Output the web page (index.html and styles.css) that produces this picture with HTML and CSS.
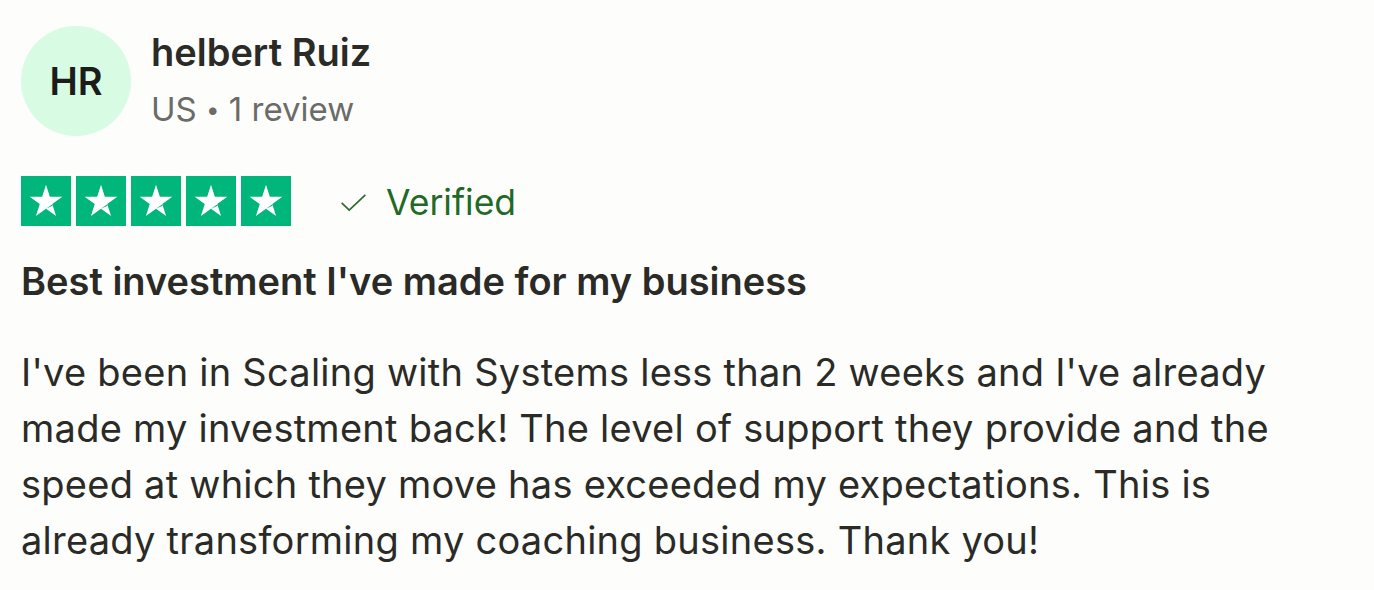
FILE: index.html
```html
<!DOCTYPE html>
<html lang="en">
<head>
<meta charset="utf-8">
<title>Review</title>
<link rel="stylesheet" href="styles.css">
</head>
<body>
<article class="review">
  <header class="consumer">
    <div class="avatar">HR</div>
    <div class="consumer-info">
      <div class="name">helbert Ruiz</div>
      <div class="meta">US <span class="dot">•</span> 1 review</div>
    </div>
  </header>
  <div class="rating-row">
    <div class="stars">
      <span class="star"><svg viewBox="0 0 24 24"><path d="M12 3.2l2.1 6.5h6.8l-5.5 4 2.1 6.5L12 16.2l-5.5 4 2.1-6.5-5.5-4h6.8z" fill="#fff"/><path d="M12 16.2l3.3-2.3 0.25 0.75z" fill="#00b67a"/></svg></span>
      <span class="star"><svg viewBox="0 0 24 24"><path d="M12 3.2l2.1 6.5h6.8l-5.5 4 2.1 6.5L12 16.2l-5.5 4 2.1-6.5-5.5-4h6.8z" fill="#fff"/><path d="M12 16.2l3.3-2.3 0.25 0.75z" fill="#00b67a"/></svg></span>
      <span class="star"><svg viewBox="0 0 24 24"><path d="M12 3.2l2.1 6.5h6.8l-5.5 4 2.1 6.5L12 16.2l-5.5 4 2.1-6.5-5.5-4h6.8z" fill="#fff"/><path d="M12 16.2l3.3-2.3 0.25 0.75z" fill="#00b67a"/></svg></span>
      <span class="star"><svg viewBox="0 0 24 24"><path d="M12 3.2l2.1 6.5h6.8l-5.5 4 2.1 6.5L12 16.2l-5.5 4 2.1-6.5-5.5-4h6.8z" fill="#fff"/><path d="M12 16.2l3.3-2.3 0.25 0.75z" fill="#00b67a"/></svg></span>
      <span class="star"><svg viewBox="0 0 24 24"><path d="M12 3.2l2.1 6.5h6.8l-5.5 4 2.1 6.5L12 16.2l-5.5 4 2.1-6.5-5.5-4h6.8z" fill="#fff"/><path d="M12 16.2l3.3-2.3 0.25 0.75z" fill="#00b67a"/></svg></span>
    </div>
    <div class="verified">
      <svg class="check" viewBox="0 0 28 20"><path d="M1.5 10.5l8 7.5L26.5 2" fill="none" stroke="#2a6b2f" stroke-width="1.8"/></svg>
      <span>Verified</span>
    </div>
  </div>
  <h2 class="title">Best investment I've made for my business</h2>
  <p class="body">I've been in Scaling with Systems less than 2 weeks and I've already made my investment back! The level of support they provide and the speed at which they move has exceeded my expectations. This is already transforming my coaching business. Thank you!</p>
</article>
</body>
</html>
```

FILE: styles.css
```css
html, body {
  margin: 0;
  padding: 0;
  background: #fdfdfc;
}
body {
  font-family: Inter, "Noto Sans", "Liberation Sans", sans-serif;
  color: #2a2a26;
}
.review {
  padding: 26px 0 0 21px;
  width: 1310px;
}
.consumer {
  display: flex;
  align-items: flex-start;
  gap: 20px;
}
.avatar {
  flex: none;
  width: 110px;
  height: 110px;
  border-radius: 50%;
  background: #d7fbe3;
  display: flex;
  align-items: center;
  justify-content: center;
  font-size: 38px;
  font-weight: 600;
  color: #1c1c1a;
}
.consumer-info {
  padding-top: 4px;
}
.name {
  font-size: 38px;
  font-weight: 600;
  line-height: 44px;
  color: #2a2a26;
}
.meta {
  font-size: 33px;
  line-height: 44px;
  margin-top: 13px;
  color: #6b6b67;
}
.dot {
  font-size: 24px;
  vertical-align: 3px;
}
.rating-row {
  display: flex;
  align-items: center;
  margin-top: 40px;
  gap: 49px;
}
.stars {
  display: flex;
  gap: 5px;
}
.star {
  width: 50px;
  height: 50px;
  background: #00b67a;
  display: flex;
  align-items: center;
  justify-content: center;
}
.star svg {
  width: 44px;
  height: 44px;
}
.verified {
  display: flex;
  align-items: center;
  gap: 19px;
  color: #1f6a26;
  font-size: 35.5px;
  padding-top: 2px;
}
.check {
  width: 27px;
  height: 19px;
}
.title {
  margin: 31px 0 0;
  font-size: 38px;
  font-weight: 600;
  line-height: 48px;
  color: #2a2a26;
}
.body {
  margin: 39px 0 0;
  font-size: 38px;
  line-height: 56px;
  letter-spacing: 0.25px;
  color: #2a2a26;
}
```
